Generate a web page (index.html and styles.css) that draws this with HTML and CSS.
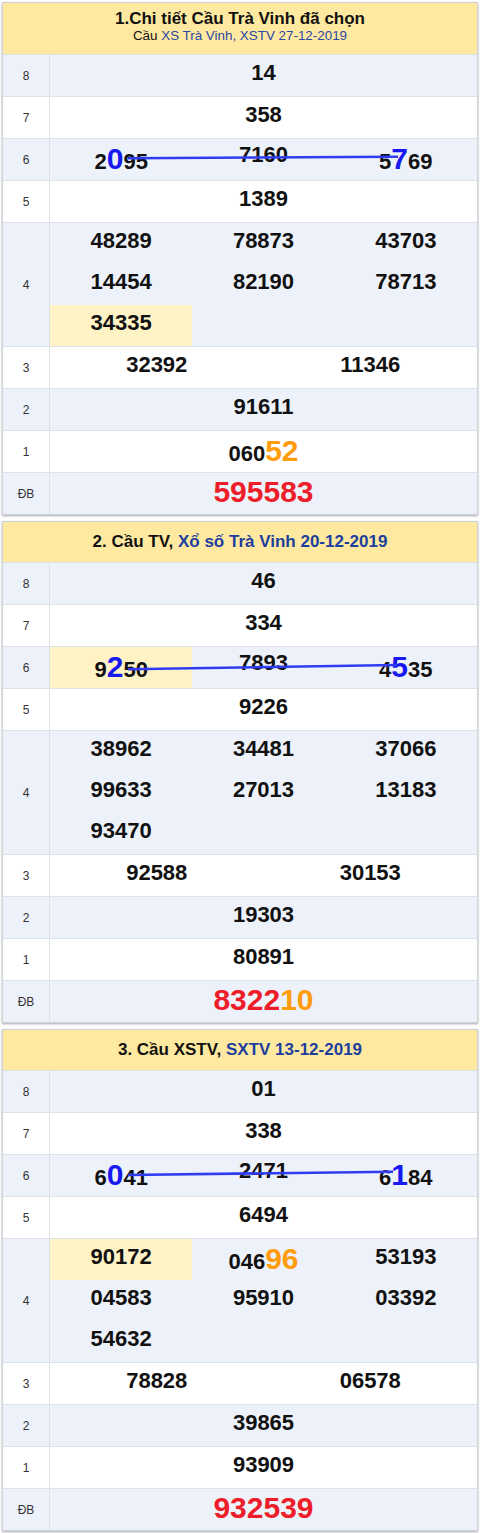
FILE: index.html
```html
<!DOCTYPE html>
<html lang="vi">
<head>
<meta charset="utf-8">
<title>Cầu Trà Vinh</title>
<link rel="stylesheet" href="styles.css">
</head>
<body>
<div class="page">

  <section class="box">
    <header class="head head-2l">
      <div class="title">1.Chi tiết Cầu Trà Vinh đã chọn</div>
      <div class="sub">Cầu <span class="blue">XS Trà Vinh, XSTV 27-12-2019</span></div>
    </header>
    <div class="row alt"><div class="lbl">8</div><div class="vals c1"><div class="it">14</div></div></div>
    <div class="row"><div class="lbl">7</div><div class="vals c1"><div class="it">358</div></div></div>
    <div class="row alt rel"><div class="lbl">6</div><div class="vals c3"><div class="it">2<span class="big bl">0</span>95</div><div class="it up">7160</div><div class="it">5<span class="big bl">7</span>69</div></div>
      <svg class="link" viewBox="0 0 474 41" preserveAspectRatio="none"><line x1="125" y1="19.3" x2="395" y2="17.7"/></svg></div>
    <div class="row"><div class="lbl">5</div><div class="vals c1"><div class="it">1389</div></div></div>
    <div class="row alt"><div class="lbl">4</div><div class="vals c3"><div class="it">48289</div><div class="it">78873</div><div class="it">43703</div><div class="it">14454</div><div class="it">82190</div><div class="it">78713</div><div class="it hl">34335</div></div></div>
    <div class="row"><div class="lbl">3</div><div class="vals c2"><div class="it">32392</div><div class="it">11346</div></div></div>
    <div class="row alt"><div class="lbl">2</div><div class="vals c1"><div class="it">91611</div></div></div>
    <div class="row"><div class="lbl">1</div><div class="vals c1"><div class="it">060<span class="big or">52</span></div></div></div>
    <div class="row alt"><div class="lbl">ĐB</div><div class="vals c1"><div class="it db">595583</div></div></div>
  </section>

  <section class="box">
    <header class="head head-1l">
      <div class="title">2. Cầu TV, <span class="blue">Xổ số Trà Vinh 20-12-2019</span></div>
    </header>
    <div class="row alt"><div class="lbl">8</div><div class="vals c1"><div class="it">46</div></div></div>
    <div class="row"><div class="lbl">7</div><div class="vals c1"><div class="it">334</div></div></div>
    <div class="row alt rel"><div class="lbl">6</div><div class="vals c3"><div class="it hl">9<span class="big bl">2</span>50</div><div class="it up">7893</div><div class="it">4<span class="big bl">5</span>35</div></div>
      <svg class="link" viewBox="0 0 474 41" preserveAspectRatio="none"><line x1="125" y1="22.3" x2="394" y2="18"/></svg></div>
    <div class="row"><div class="lbl">5</div><div class="vals c1"><div class="it">9226</div></div></div>
    <div class="row alt"><div class="lbl">4</div><div class="vals c3"><div class="it">38962</div><div class="it">34481</div><div class="it">37066</div><div class="it">99633</div><div class="it">27013</div><div class="it">13183</div><div class="it">93470</div></div></div>
    <div class="row"><div class="lbl">3</div><div class="vals c2"><div class="it">92588</div><div class="it">30153</div></div></div>
    <div class="row alt"><div class="lbl">2</div><div class="vals c1"><div class="it">19303</div></div></div>
    <div class="row"><div class="lbl">1</div><div class="vals c1"><div class="it">80891</div></div></div>
    <div class="row alt"><div class="lbl">ĐB</div><div class="vals c1"><div class="it db">8322<span class="or">10</span></div></div></div>
  </section>

  <section class="box">
    <header class="head head-1l">
      <div class="title">3. Cầu XSTV, <span class="blue">SXTV 13-12-2019</span></div>
    </header>
    <div class="row alt"><div class="lbl">8</div><div class="vals c1"><div class="it">01</div></div></div>
    <div class="row"><div class="lbl">7</div><div class="vals c1"><div class="it">338</div></div></div>
    <div class="row alt rel"><div class="lbl">6</div><div class="vals c3"><div class="it">6<span class="big bl">0</span>41</div><div class="it up">2471</div><div class="it">6<span class="big bl">1</span>84</div></div>
      <svg class="link" viewBox="0 0 474 41" preserveAspectRatio="none"><line x1="125" y1="20" x2="390" y2="16.7"/></svg></div>
    <div class="row"><div class="lbl">5</div><div class="vals c1"><div class="it">6494</div></div></div>
    <div class="row alt"><div class="lbl">4</div><div class="vals c3"><div class="it hl">90172</div><div class="it">046<span class="big or">96</span></div><div class="it">53193</div><div class="it">04583</div><div class="it">95910</div><div class="it">03392</div><div class="it">54632</div></div></div>
    <div class="row"><div class="lbl">3</div><div class="vals c2"><div class="it">78828</div><div class="it">06578</div></div></div>
    <div class="row alt"><div class="lbl">2</div><div class="vals c1"><div class="it">39865</div></div></div>
    <div class="row"><div class="lbl">1</div><div class="vals c1"><div class="it">93909</div></div></div>
    <div class="row alt"><div class="lbl">ĐB</div><div class="vals c1"><div class="it db">932539</div></div></div>
  </section>

</div>
</body>
</html>
```
FILE: styles.css
```css
html, body {
  margin: 0;
  padding: 0;
  background: #ffffff;
}
body {
  font-family: "Liberation Sans", Arial, sans-serif;
  color: #111;
}
.page {
  padding: 2px 2px 0 2px;
}
.box {
  border: 1px solid #cfd3da;
  box-shadow: 0 1px 2px rgba(0, 0, 0, 0.35);
  margin-bottom: 6px;
  background: #fff;
}
.head {
  background: #ffe9a0;
  text-align: center;
  color: #111;
}
.head-2l {
  height: 51px;
  box-sizing: border-box;
  padding-top: 6px;
}
.head-2l .title {
  font-size: 17px;
  font-weight: bold;
  line-height: 19px;
}
.head-2l .sub {
  font-size: 13.4px;
  line-height: 16px;
}
.head-2l .sub .blue {
  color: #2a46a6;
}
.head-1l {
  height: 40px;
}
.head-1l .title {
  font-size: 17px;
  font-weight: bold;
  line-height: 40px;
}
.blue {
  color: #1d3e9e;
}
.row {
  display: grid;
  grid-template-columns: 47px 1fr;
  border-top: 1px solid #dde1e8;
  background: #fff;
}
.row.alt {
  background: #edf1f9;
}
.row.rel {
  position: relative;
}
.lbl {
  border-right: 1px solid #dde1e8;
  font-size: 12px;
  color: #333;
  display: flex;
  align-items: center;
  justify-content: center;
}
.vals {
  display: grid;
}
.vals.c1 { grid-template-columns: 1fr; }
.vals.c2 { grid-template-columns: 1fr 1fr; }
.vals.c3 { grid-template-columns: 1fr 1fr 1fr; }
.it {
  height: 41px;
  box-sizing: border-box;
  padding-top: 5px;
  text-align: center;
  font-size: 22px;
  font-weight: bold;
  line-height: 25px;
  color: #111;
  white-space: nowrap;
}
.it.up {
  padding-top: 3px;
}
.it.hl {
  background: #fff3c6;
}
.big {
  font-size: 30px;
  line-height: 30px;
}
.bl {
  color: #1818f0;
}
.or {
  color: #ff9c0c;
}
.it.db {
  font-size: 30px;
  line-height: 34px;
  padding-top: 2px;
  color: #ee1d2a;
}
.it.db .or {
  color: #ff9c0c;
}
.link {
  position: absolute;
  left: 0;
  top: 0;
  width: 100%;
  height: 100%;
  overflow: visible;
  pointer-events: none;
}
.link line {
  stroke: #2f3cf2;
  stroke-width: 2.6;
}
```
